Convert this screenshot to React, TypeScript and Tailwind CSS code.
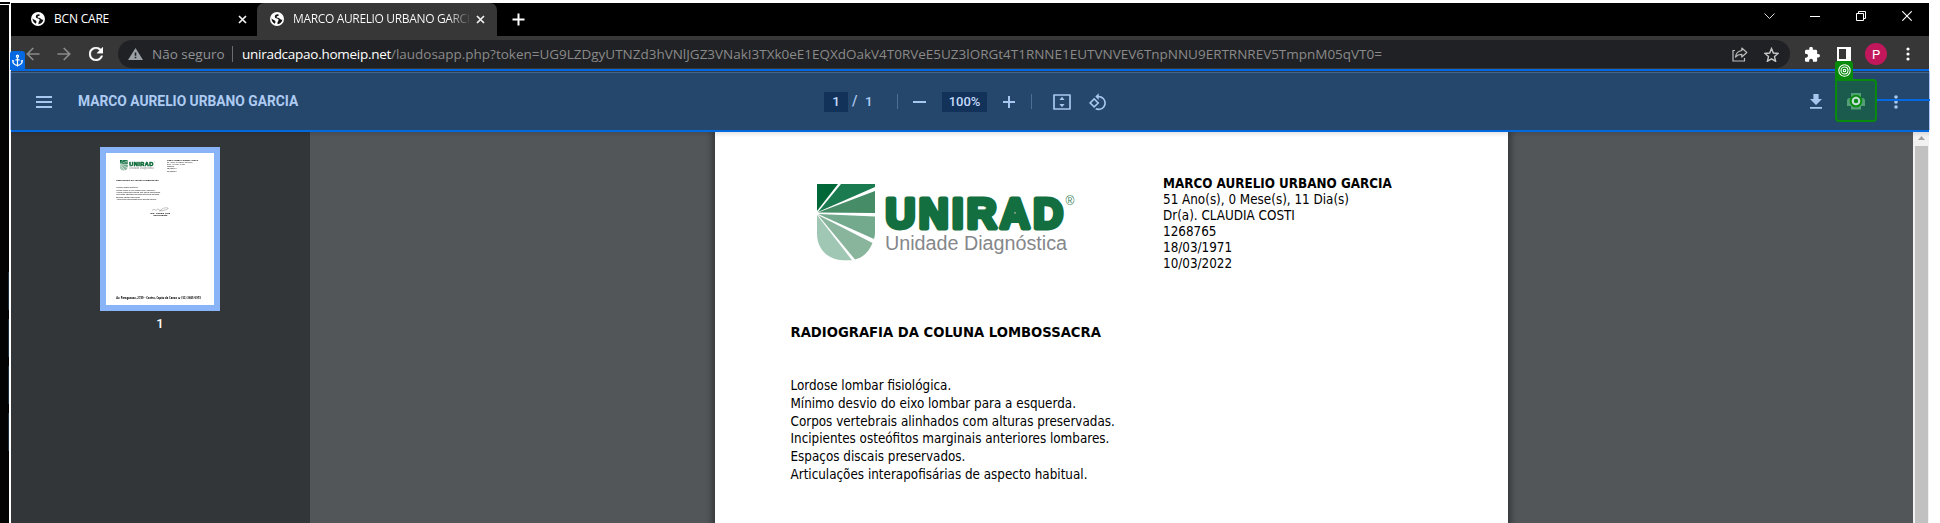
import React from "react";
import { Anchor } from "lucide-react";

const URL_PATH =
  "/laudosapp.php?token=UG9LZDgyUTNZd3hVNlJGZ3VNakI3TXk0eE1EQXdOakV4T0RVeE5UZ3lORGt4T1RNNE1EUTVNVEV6TnpNNU9ERTRNREV5TmpnM05qVT0=";

const patientLines = ["51 Ano(s), 0 Mese(s), 11 Dia(s)", "Dr(a). CLAUDIA COSTI", "1268765", "18/03/1971", "10/03/2022"];

const findings = [
  "Lordose lombar fisiológica.",
  "Mínimo desvio do eixo lombar para a esquerda.",
  "Corpos vertebrais alinhados com alturas preservadas.",
  "Incipientes osteófitos marginais anteriores lombares.",
  "Espaços discais preservados.",
  "Articulações interapofisárias de aspecto habitual.",
];

function Globe() {
  return (
    <svg className="h-[14px] w-[14px] shrink-0" viewBox="0 0 14 14">
      <circle cx="7" cy="7" r="7" fill="#fff" />
      <path
        d="M8.300 2.200C6.300 2 5 2.900 4.800 4.400c-.1 1.300.9 1.800 2.200 2 1 .2 1.700.6 1.600 1.500-.1 1-.9 1.300-1 2.300l-.2 2c2.700-.2 4.700-2 5-4.700-.9.5-1.700.3-2.300-.5-.7-.9-1.700-1.100-2.700-1.200-.6-.1-.9-.4-.8-.9.1-.6.700-.7 1.500-.8.600-.2.800-1.200.2-1.900zM1.500 6.300c0 2.500 1.200 4.500 3.300 5.400l.7-1.700c-.1-1.200-.7-1.600-1.700-2C2.800 7.700 2 7.200 1.500 6.300z"
        fill="#111"
      />
    </svg>
  );
}

function Cross() {
  return (
    <svg className="h-[9px] w-[9px] shrink-0" viewBox="0 0 9 9" fill="none" stroke="#f2f2f2" strokeWidth="1.700">
      <path d="M1 1l7 7M8 1l-7 7" />
    </svg>
  );
}

function TabStrip() {
  return (
    <div className="flex h-[33px] bg-black font-['Open_Sans',sans-serif] text-[12px] text-white">
      <div className="flex w-[246px] items-center pr-[10px] pb-px pl-[20px]">
        <Globe />
        <span className="ml-[9px] flex-1 tracking-[-0.2px] whitespace-nowrap">BCN CARE</span>
        <Cross />
      </div>
      <div className="flex w-[240px] items-center rounded-t-[7px] bg-[#373737] pr-[12px] pb-px pl-[13px]">
        <Globe />
        <span className="ml-[9px] w-[176px] overflow-hidden bg-gradient-to-r from-white from-88% to-[#4a4a4a] bg-clip-text tracking-[-0.350px] whitespace-nowrap text-transparent">
          MARCO AURELIO URBANO GARCIA
        </span>
        <span className="ml-auto flex">
          <Cross />
        </span>
      </div>
      <div className="flex items-center pl-[15px]">
        <svg className="h-[13px] w-[13px]" viewBox="0 0 13 13" stroke="#fff" strokeWidth="2">
          <path d="M6.500 .5v12M.5 6.500h12" />
        </svg>
      </div>
      <div className="ml-auto flex items-start pt-[8px] pr-[17px]">
        <svg className="mt-[2px] h-[7px] w-[11px]" viewBox="0 0 11 7" fill="none" stroke="#ddd">
          <path d="M.5 .5l5 5 5-5" />
        </svg>
        <svg className="ml-[35px] h-[10px] w-[10px]" viewBox="0 0 10 10" stroke="#fff">
          <path d="M0 5.500h10" />
        </svg>
        <svg className="ml-[36px] h-[10px] w-[10px]" viewBox="0 0 10 10" fill="none" stroke="#fff">
          <path d="M.5 2.500h7v7h-7zM2.500 2.500v-2h7v7h-2" />
        </svg>
        <svg className="ml-[36px] h-[10px] w-[10px]" viewBox="0 0 10 10" stroke="#fff" strokeWidth="1.100">
          <path d="M.3 .3l9.400 9.400M9.700 .3l-9.400 9.400" />
        </svg>
      </div>
    </div>
  );
}

function AddressBar() {
  return (
    <div className="flex h-[33px] items-start bg-[#373737] pt-[4px] pr-[19px]">
      <div className="flex h-[28px] w-[107px] items-center pl-[15px]">
        <svg className="h-[14px] w-[14px]" viewBox="0 0 14 14" fill="none" stroke="#8b8b8b" strokeWidth="1.700">
          <path d="M13.500 7H1.500M7.300 1L1.300 7l6 6" />
        </svg>
        <svg className="ml-[17px] h-[14px] w-[14px]" viewBox="0 0 14 14" fill="none" stroke="#8b8b8b" strokeWidth="1.700">
          <path d="M.5 7h12M6.700 1l6 6-6 6" />
        </svg>
        <svg className="ml-[18px] h-[14px] w-[14px]" viewBox="4 4 16 16" fill="#fff" stroke="#fff" strokeWidth=".4">
          <path d="M17.650 6.350C16.200 4.900 14.210 4 12 4c-4.420 0-7.990 3.580-7.990 8s3.570 8 7.990 8c3.730 0 6.840-2.550 7.730-6h-2.080c-.82 2.330-3.040 4-5.650 4-3.310 0-6-2.690-6-6s2.690-6 6-6c1.660 0 3.140.69 4.220 1.780L13 11h7V4l-2.350 2.350z" />
        </svg>
      </div>
      <div className="flex h-[28px] w-[1672px] items-center rounded-full bg-[#202124] pr-[11px] pl-[10px] font-['Open_Sans',sans-serif] text-[13.500px] leading-[18px] whitespace-nowrap text-[#909296]">
        <svg className="h-[12px] w-[15px]" viewBox="0 0 15 12">
          <path d="M7.500 0L15 12H0z" fill="#9aa0a6" />
          <path d="M6.700 4.500h1.600v3.300H6.700zM6.700 8.700h1.600v1.500H6.700z" fill="#202124" />
        </svg>
        <span className="ml-[9px] w-[80px]">Não seguro</span>
        <span className="mr-[9px] h-[16px] w-px bg-[#6b6d70]" />
        <span className="w-[149px] tracking-[-0.270px] text-white">uniradcapao.homeip.net</span>
        <span className="tracking-[-0.015px] text-[#8a8a8a]">{URL_PATH}</span>
        <svg className="ml-auto h-[15px] w-[16px]" viewBox="0 0 16 15" fill="none" stroke="#bdbdbd" strokeWidth="1.200">
          <path d="M3 3.500H1v10.500h11.500v-3" />
          <path d="M9.800 1l5 4.500-5 4.500V7.300C7 7.200 5 8.200 3.500 10c.4-3.200 2.500-6 6.300-6.500z" strokeLinejoin="round" />
        </svg>
        <svg className="ml-[16px] h-[15px] w-[15px]" viewBox="1.500 1.500 21 20" fill="none" stroke="#c8c8c8" strokeWidth="2">
          <path d="M12 3.300l2.600 6.100 6.600.6-5 4.400 1.500 6.500-5.700-3.400-5.700 3.400 1.500-6.500-5-4.400 6.600-.6z" />
        </svg>
      </div>
      <div className="flex h-[28px] flex-1 items-center justify-end">
        <svg className="h-[15px] w-[15px]" viewBox="2 1.500 21 20.500" fill="#fff">
          <path d="M20.500 11H19V7c0-1.100-.9-2-2-2h-4V3.500a2.500 2.500 0 0 0-5 0V5H4c-1.100 0-1.990.9-1.990 2v3.800H3.500c1.490 0 2.700 1.210 2.700 2.700s-1.210 2.700-2.700 2.700H2V20c0 1.100.9 2 2 2h3.800v-1.500c0-1.490 1.210-2.700 2.700-2.700s2.700 1.210 2.700 2.700V22H17c1.100 0 2-.9 2-2v-4h1.500a2.500 2.500 0 0 0 0-5z" />
        </svg>
        <svg className="ml-[17px] h-[14px] w-[14px]" viewBox="0 0 14 14">
          <path d="M0 0h14v14H0z" fill="#fff" />
          <path d="M2 2h7v10H2z" fill="#373737" />
        </svg>
        <span className="ml-[14px] flex h-[22px] w-[22px] items-center justify-center rounded-full bg-[#c2185b] font-[Roboto,sans-serif] text-[13px] leading-none text-white">
          P
        </span>
        <svg className="ml-[19px] h-[14px] w-[4px]" viewBox="0 0 4 14" fill="#fff">
          <circle cx="2" cy="2" r="1.600" />
          <circle cx="2" cy="7" r="1.600" />
          <circle cx="2" cy="12" r="1.600" />
        </svg>
      </div>
    </div>
  );
}

function PdfToolbar() {
  return (
    <div className="flex h-[63px] flex-col border-y-2 border-[#0468e0]">
      <div className="h-px bg-[#2b3d52]" />
      <div className="flex flex-1 items-center border-t border-[#44668d] bg-[#25476b] font-[Roboto,sans-serif] text-[14px] font-medium text-[#aecbf3]">
        <svg className="ml-[25px] h-[12px] w-[16px]" viewBox="0 0 16 12" fill="#a8c7f0">
          <path d="M0 0h16v2H0zM0 5h16v2H0zM0 10h16v2H0z" />
        </svg>
        <span className="ml-[26px] w-[746px] text-[13.800px] font-bold whitespace-nowrap">MARCO AURELIO URBANO GARCIA</span>
        <span className="flex h-[20px] w-[24px] items-center justify-center bg-[#12325a] text-[13.500px] text-[#c3dafa]">1</span>
        <span className="ml-[4px] w-[13px]">/</span>
        <span className="w-[11px] text-[13.500px]">1</span>
        <span className="ml-[21px] h-[15px] w-px bg-[#4c6e97]" />
        <span className="ml-[15px] h-[2px] w-[13px] bg-[#a8c7f0]" />
        <span className="ml-[16px] flex h-[20px] w-[45px] items-center justify-center bg-[#12325a] text-[13px] text-[#c3dafa]">
          100%
        </span>
        <svg className="ml-[16px] h-[12px] w-[12px]" viewBox="0 0 12 12" fill="#a8c7f0">
          <path d="M5 0h2v5h5v2H7v5H5V7H0V5h5z" />
        </svg>
        <span className="ml-[16px] h-[15px] w-px bg-[#4c6e97]" />
        <svg className="ml-[21px] h-[16px] w-[18px]" viewBox="0 0 18 16" fill="#a8c7f0">
          <path d="M1 1h16v14H1z" fill="none" stroke="#a8c7f0" strokeWidth="1.700" strokeLinejoin="round" />
          <path d="M9 2.800l2.600 3.300H6.400zM9 13.200l2.600-3.300H6.400z" />
        </svg>
        <svg className="ml-[17px] h-[18px] w-[19px]" viewBox="0 .5 23 22.500" fill="#a8c7f0">
          <path d="M7.340 6.410L.86 12.900l6.490 6.480 6.490-6.480-6.500-6.490zM3.690 12.900l3.660-3.660L11 12.900l-3.660 3.660-3.650-3.660zm15.670-6.260C17.610 4.880 15.300 4 13 4V.76L8.760 5 13 9.240V6c1.790 0 3.580.68 4.950 2.050 2.730 2.730 2.730 7.170 0 9.900C16.580 19.320 14.790 20 13 20c-.97 0-1.940-.21-2.840-.61l-1.490 1.490C10.020 21.620 11.510 22 13 22c2.300 0 4.610-.88 6.360-2.640 3.520-3.510 3.520-9.210 0-12.720z" />
        </svg>
        <svg className="ml-auto h-[15px] w-[12px]" viewBox="0 0 12 15" fill="#a8c7f0">
          <path d="M3.400 0h5.200v5H12L6 11 0 5h3.400zM0 13h12v1.700H0z" />
        </svg>
        <svg className="ml-[25px] h-[17px] w-[18px]" viewBox="0 0 18 17" fill="#76aaa4">
          <path d="M4 0h10v4H4zM3 5h12a3 3 0 0 1 3 3v5h-4v3.500H4V13H0V8a3 3 0 0 1 3-3z" />
        </svg>
        <svg className="mr-[31px] ml-[29px] h-[14px] w-[4px]" viewBox="0 0 4 14" fill="#a8c7f0">
          <circle cx="2" cy="2" r="1.800" />
          <circle cx="2" cy="7" r="1.800" />
          <circle cx="2" cy="12" r="1.800" />
        </svg>
      </div>
    </div>
  );
}

function Logo() {
  return (
    <svg className="h-[82px] w-[264px]" viewBox="0 0 264 82">
      <path d="M0 0h21L0 27z" fill="#006838" />
      <path d="M24 0h34v3L1 28z" fill="#1a7a50" />
      <path d="M58 7v22L1 28.500z" fill="#468c66" />
      <path d="M58 32.500V48q0 4-1 7L1 30z" fill="#73a98d" />
      <path d="M55.500 59C52 68 46 73.500 38 75.500L1 31z" fill="#8ab59d" />
      <path d="M0 31l35 45.200h-9C11 76 0 65 0 50z" fill="#a0c6b4" />
      <text
        x="68.500"
        y="43.500"
        textLength="181"
        lengthAdjust="spacingAndGlyphs"
        className="fill-[#146f40] stroke-[#146f40] font-['Liberation_Sans',sans-serif] text-[42px] font-bold tracking-[3.500px]"
        strokeWidth="4.800"
        strokeLinejoin="round"
      >
        UNIRAD
      </text>
      <text x="248.500" y="21" className="fill-[#3c8560] font-['Liberation_Sans',sans-serif] text-[12px]">
        ®
      </text>
      <text
        x="68"
        y="66"
        textLength="182"
        lengthAdjust="spacingAndGlyphs"
        className="fill-[#85878b] font-['Liberation_Sans',sans-serif] text-[20px]"
      >
        Unidade Diagnóstica
      </text>
    </svg>
  );
}

function ReportPage() {
  return (
    <div className="flex h-[1120px] w-[793px] flex-col bg-white pt-[44px] pr-[70px] pl-[75.500px] font-['DejaVu_Sans_Condensed','DejaVu_Sans',sans-serif] text-[13.330px] text-black">
      <div className="flex h-[101px] items-start">
        <div className="ml-[26.500px] pt-[8px]">
          <Logo />
        </div>
        <div className="ml-[82px] leading-[16px] whitespace-nowrap">
          <div className="font-bold">MARCO AURELIO URBANO GARCIA</div>
          {patientLines.map((line) => (
            <div key={line}>{line}</div>
          ))}
        </div>
      </div>
      <div className="mt-[46px] text-[14.670px] leading-[18px] font-bold">RADIOGRAFIA DA COLUNA LOMBOSSACRA</div>
      <div className="mt-[36px] leading-[17.800px]">
        {findings.map((line) => (
          <div key={line}>{line}</div>
        ))}
      </div>
      <div className="mt-[46px] flex w-[160px] flex-col items-center self-center text-center text-[16px] leading-[18px] font-bold">
        <svg className="h-[34px] w-[130px]" viewBox="0 0 130 34" fill="none" stroke="#444" strokeWidth="2.500">
          <path d="M2 27C20 8 24 20 32 22s14-16 20-6 18 8 26-2 36-14 44-8-36 22-66 22" />
        </svg>
        <span className="whitespace-nowrap">Dra. Claudia Costi</span>
        <span>Radiologista</span>
      </div>
      <div className="mt-auto mb-[42px] text-[18.500px] font-bold whitespace-nowrap">
        Av. Paraguassu, 2739 - Centro, Capão da Canoa ☎ (51) 3665-5973
      </div>
    </div>
  );
}

function Viewer() {
  return (
    <div className="relative flex h-[391px] overflow-hidden bg-[#525659]">
      <div className="flex w-[299px] flex-col items-start bg-[#323639] pt-[15px] pl-[89px]">
        <div className="h-[164px] w-[120px] border-6 border-[#8ab4f8] bg-white">
          <div className="h-[152px] w-[108px] overflow-hidden">
            <div className="origin-top-left scale-[0.1362]">
              <ReportPage />
            </div>
          </div>
        </div>
        <span className="mt-[5px] w-[120px] text-center font-[Roboto,sans-serif] text-[13px] leading-[16px] font-medium text-white">
          1
        </span>
      </div>
      <div className="flex-1 pl-[405px]">
        <div className="w-[793px] shadow-[0_0_6px_3px_rgba(0,0,0,0.35)]">
          <ReportPage />
        </div>
      </div>
      <div className="flex w-[16px] flex-col items-center bg-[#f1f1f1]">
        <svg className="mt-[4px] h-[4px] w-[7px]" viewBox="0 0 7 4" fill="#a0a0a0">
          <path d="M3.500 0L7 4H0z" />
        </svg>
        <div className="mt-[6px] w-[13px] flex-1 bg-[#c1c1c1]" />
      </div>
      <div className="absolute inset-x-0 top-0 h-[5px] bg-gradient-to-b from-black/10 to-transparent" />
    </div>
  );
}

function Annotations() {
  return (
    <>
      <div className="absolute top-[71px] left-[10px] h-[59px] w-px bg-[#a9c8f6]" />
      <div className="absolute top-[71px] left-[1929px] h-[59px] w-px bg-[#a9c8f6]" />
      <div className="absolute top-[51px] left-[10px] flex h-[19px] w-[15px] items-center justify-center rounded-t-[3px] bg-[#0468e0]">
        <Anchor className="h-[13px] w-[13px] text-white" strokeWidth={2.2} />
      </div>
      <div className="absolute top-[99px] left-[1877px] h-[2px] w-[53px] bg-[#0468e0]" />
      <div className="absolute top-[79px] left-[1835px] flex h-[43px] w-[42px] items-center justify-center rounded-[4px] rounded-tl-none border-2 border-[#088a0c] bg-[#088a0c]/30">
        <svg className="h-[14px] w-[14px]" viewBox="0 0 14 14" fill="none">
          <circle cx="7" cy="7" r="5.300" stroke="#088a0c" strokeWidth="2" />
          <circle cx="7" cy="7" r="3.300" stroke="#c4dfd6" strokeWidth="2" />
          <circle cx="7" cy="7" r="2" fill="#088a0c" />
        </svg>
      </div>
      <div className="absolute top-[61px] left-[1835px] flex h-[19px] w-[18px] items-center justify-center rounded-t-[3px] bg-[#088a0c]">
        <svg className="h-[13px] w-[13px]" viewBox="0 0 13 13" fill="none" stroke="#fff" strokeWidth="1.100">
          <circle cx="6.500" cy="6.500" r="5.700" />
          <circle cx="6.500" cy="6.500" r="3.500" />
          <circle cx="6.500" cy="6.500" r="1.300" />
        </svg>
      </div>
    </>
  );
}

export default function App() {
  return (
    <div className="relative flex h-[523px] w-[1940px] overflow-hidden bg-white">
      <div className="flex w-[11px] flex-col pt-[2px]">
        <div className="h-[2px] w-[10px] bg-black" />
        <div className="mt-px flex w-[9px] flex-1 flex-col items-end gap-[9px] bg-[#030303] pt-[267px]">
          <div className="h-[38px] w-px bg-[#1b3040]" />
          <div className="h-[38px] w-px bg-[#1b3040]" />
          <div className="h-[38px] w-px bg-[#1b3040]" />
          <div className="h-[38px] w-px bg-[#1b3040]" />
        </div>
      </div>
      <div className="flex w-[1918px] flex-col pt-[3px]">
        <TabStrip />
        <AddressBar />
        <PdfToolbar />
        <Viewer />
      </div>
      <Annotations />
    </div>
  );
}
